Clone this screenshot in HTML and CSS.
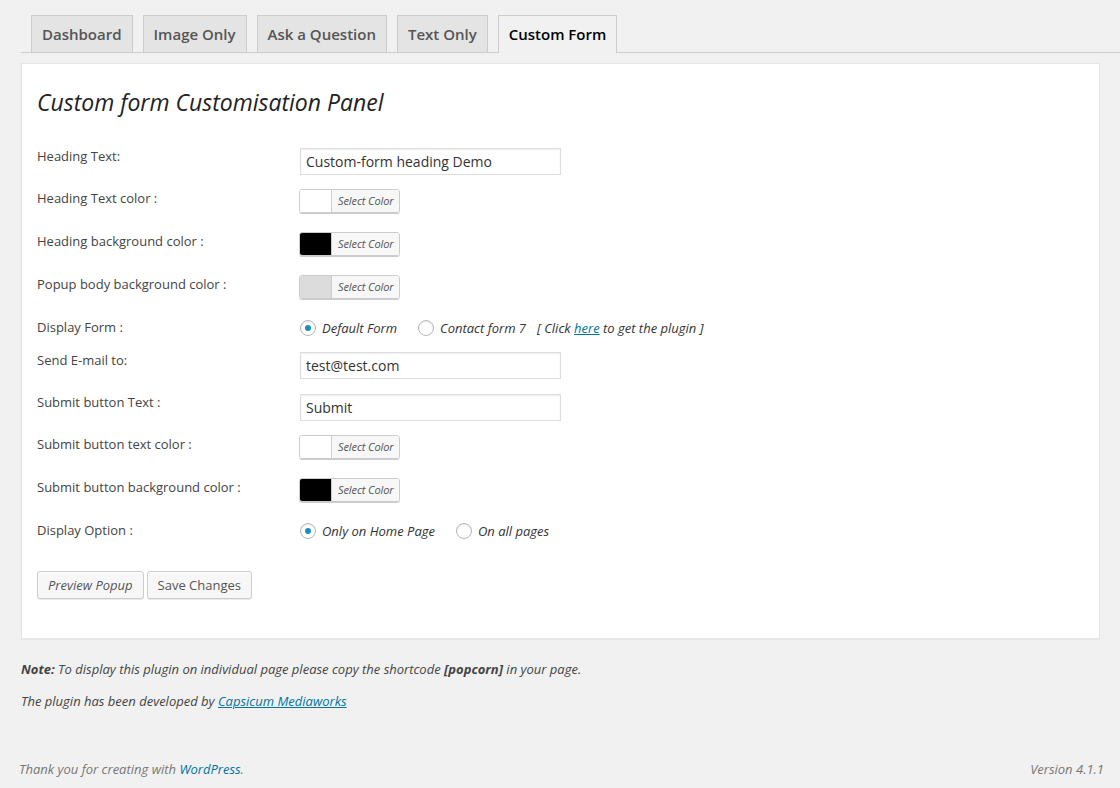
FILE: index.html
```html
<!DOCTYPE html>
<html lang="en">
<head>
<meta charset="utf-8">
<title>Custom Form</title>
<link rel="stylesheet" href="styles.css">
</head>
<body>
<div class="page">
  <div class="wrap">
    <nav class="tabs">
      <a class="tab">Dashboard</a>
      <a class="tab">Image Only</a>
      <a class="tab">Ask a Question</a>
      <a class="tab">Text Only</a>
      <a class="tab active">Custom Form</a>
    </nav>

    <div class="panel">
      <h2 class="title">Custom form Customisation Panel</h2>

      <div class="form">
        <div class="row row-text">
          <label class="lbl">Heading Text:</label>
          <div class="ctl"><input class="txt" type="text" value="Custom-form heading Demo"></div>
        </div>
        <div class="row row-color">
          <label class="lbl">Heading Text color :</label>
          <div class="ctl"><span class="cbtn"><span class="swatch sw-white"></span><span class="cbtn-text">Select Color</span></span></div>
        </div>
        <div class="row row-color">
          <label class="lbl">Heading background color :</label>
          <div class="ctl"><span class="cbtn"><span class="swatch sw-black"></span><span class="cbtn-text">Select Color</span></span></div>
        </div>
        <div class="row row-color row-before-radio">
          <label class="lbl">Popup body background color :</label>
          <div class="ctl"><span class="cbtn"><span class="swatch sw-grey"></span><span class="cbtn-text">Select Color</span></span></div>
        </div>
        <div class="row row-radio">
          <label class="lbl">Display Form :</label>
          <div class="ctl radios">
            <span class="radio checked"></span><span class="rlabel">Default Form</span>
            <span class="radio"></span><span class="rlabel">Contact form 7</span>
            <span class="hint">[ Click <a href="#" class="link">here</a> to get the plugin ]</span>
          </div>
        </div>
        <div class="row row-text row-wide">
          <label class="lbl">Send E-mail to:</label>
          <div class="ctl"><input class="txt" type="text" value="test@test.com"></div>
        </div>
        <div class="row row-text">
          <label class="lbl">Submit button Text :</label>
          <div class="ctl"><input class="txt" type="text" value="Submit"></div>
        </div>
        <div class="row row-color">
          <label class="lbl">Submit button text color :</label>
          <div class="ctl"><span class="cbtn"><span class="swatch sw-white"></span><span class="cbtn-text">Select Color</span></span></div>
        </div>
        <div class="row row-color row-before-radio">
          <label class="lbl">Submit button background color :</label>
          <div class="ctl"><span class="cbtn"><span class="swatch sw-black"></span><span class="cbtn-text">Select Color</span></span></div>
        </div>
        <div class="row row-radio row-last">
          <label class="lbl">Display Option :</label>
          <div class="ctl radios">
            <span class="radio checked"></span><span class="rlabel">Only on Home Page</span>
            <span class="radio"></span><span class="rlabel">On all pages</span>
          </div>
        </div>
      </div>

      <div class="actions">
        <span class="btn btn-italic">Preview Popup</span>
        <span class="btn">Save Changes</span>
      </div>
    </div>

    <div class="notes">
      <p><b>Note:</b> To display this plugin on individual page please copy the shortcode <b>[popcorn]</b> in your page.</p>
      <p>The plugin has been developed by <a href="#" class="link">Capsicum Mediaworks</a></p>
    </div>
  </div>

  <footer class="footer">
    <span>Thank you for creating with <a href="#" class="flink">WordPress</a>.</span>
    <span>Version 4.1.1</span>
  </footer>
</div>
</body>
</html>
```

FILE: styles.css
```css
* { box-sizing: border-box; }
html, body { margin: 0; padding: 0; }
body {
  background: #f1f1f1;
  font-family: "Open Sans", "Liberation Sans", sans-serif;
  font-size: 13px;
  color: #444;
  line-height: 1.4;
}
.page {
  min-height: 100vh;
  display: flex;
  flex-direction: column;
}
.wrap { padding-left: 21px; }

/* Tabs */
.tabs {
  display: flex;
  align-items: flex-start;
  gap: 10px;
  margin-top: 15px;
  padding-left: 10px;
  height: 38px;
  border-bottom: 1px solid #ccc;
}
.tab {
  display: block;
  height: 37px;
  padding: 0 10px;
  border: 1px solid #ccc;
  border-bottom: none;
  background: #e4e4e4;
  color: #555;
  font-size: 15px;
  font-weight: 600;
  line-height: 36px;
  text-decoration: none;
  white-space: nowrap;
}
.tab.active {
  height: 38px;
  background: #f1f1f1;
  color: #000;
}

/* Panel */
.panel {
  margin: 10px 20px 0 0;
  background: #fff;
  border: 1px solid #e5e5e5;
  box-shadow: 0 1px 1px rgba(0,0,0,.04);
  padding: 0 15px 39px 15px;
}
.title {
  margin: 24px 0 31px;
  font-size: 23px;
  font-weight: 400;
  font-style: italic;
  line-height: 29px;
  color: #222;
}
.row {
  display: grid;
  grid-template-columns: 263px 1fr;
  align-items: start;
}
.row-text { margin-bottom: 14px; }
.row-text.row-wide { margin-bottom: 15px; }
.row-color { margin-bottom: 19px; }
.row-color.row-before-radio { margin-bottom: 20px; }
.row-radio { margin-bottom: 15px; }
.row-radio.row-last { margin-bottom: 31px; }
.lbl {
  display: block;
  line-height: 18px;
  color: #444;
}
.row-text .lbl { margin-top: -1px; }
.row-radio .lbl { margin-top: -1px; }

.txt {
  display: block;
  width: 261px;
  height: 27px;
  margin: 0;
  padding: 0 5px;
  border: 1px solid #ddd;
  box-shadow: inset 0 1px 2px rgba(0,0,0,.07);
  background: #fff;
  font-family: "Open Sans", "Liberation Sans", sans-serif;
  font-size: 14px;
  color: #333;
  outline: none;
}

/* color picker button */
.cbtn {
  display: inline-flex;
  height: 24px;
  margin-left: -1px;
  border: 1px solid #ccc;
  border-radius: 3px;
  box-shadow: 0 1px 0 #ccc;
  overflow: hidden;
  vertical-align: top;
}
.swatch { width: 31px; height: 22px; display: block; }
.sw-white { background: #fff; }
.sw-black { background: #000; }
.sw-grey { background: #dcdcdc; }
.cbtn-text {
  display: block;
  padding: 0 5px 0 6px;
  border-left: 1px solid #ccc;
  background: #f7f7f7;
  color: #555;
  font-size: 11px;
  font-style: italic;
  line-height: 22px;
  white-space: nowrap;
  letter-spacing: -0.1px;
}

/* radios */
.radios {
  display: flex;
  align-items: center;
  height: 18px;
  font-style: italic;
  color: #333;
  line-height: 18px;
  white-space: nowrap;
}
.radio {
  position: relative;
  width: 16px;
  height: 16px;
  flex: none;
  border: 1px solid #b4b9be;
  border-radius: 50%;
  background: #fff;
  box-shadow: inset 0 1px 2px rgba(0,0,0,.1);
  margin-right: 6px;
}
.radio.checked::after {
  content: "";
  position: absolute;
  left: 4px;
  top: 4px;
  width: 6px;
  height: 6px;
  border-radius: 50%;
  background: #1e8cbe;
}
.rlabel { margin-right: 21px; }
.rlabel:last-child { margin-right: 0; }
.hint { margin-left: -10px; }
.link { color: #0074a2; text-decoration: underline; }

/* buttons */
.actions {
  display: flex;
  gap: 3px;
}
.btn {
  display: inline-block;
  height: 28px;
  padding: 0 10px 1px;
  border: 1px solid #ccc;
  border-radius: 3px;
  background: #f7f7f7;
  box-shadow: inset 0 1px 0 #fff, 0 1px 0 rgba(0,0,0,.08);
  color: #555;
  font-size: 13px;
  line-height: 26px;
  white-space: nowrap;
}
.btn-italic { font-style: italic; }

/* notes */
.notes {
  margin-top: 20px;
  font-style: italic;
  color: #444;
}
.notes p {
  margin: 0 0 12px;
  line-height: 20px;
}
.notes b { font-weight: 700; }

/* footer */
.footer {
  margin-top: auto;
  display: flex;
  justify-content: space-between;
  padding: 0 16px 9px 19px;
  font-style: italic;
  color: #777;
  line-height: 19.5px;
}
.flink { color: #0074a2; text-decoration: none; }
```
